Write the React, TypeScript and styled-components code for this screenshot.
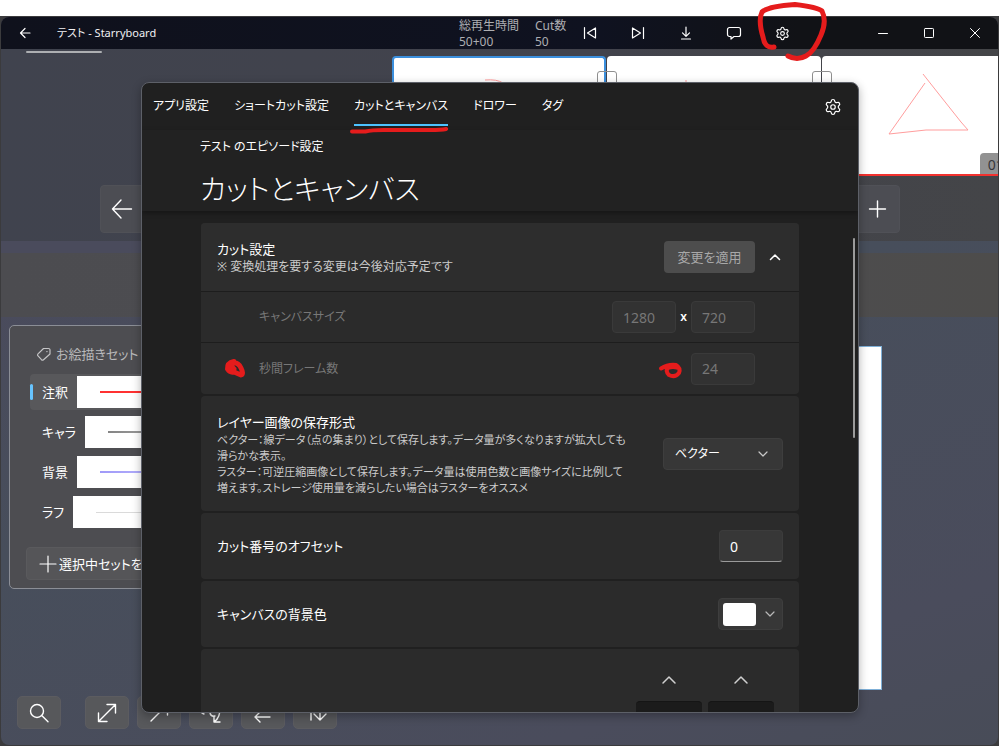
import React from "react";
import styled, { createGlobalStyle } from "styled-components";
import { Settings } from "lucide-react";

const GlobalStyle = createGlobalStyle`
  *, *::before, *::after { box-sizing: border-box; }
  body {
    margin: 0;
    background: #fff;
    font-family: "Noto Sans", "Noto Sans CJK JP", sans-serif;
    font-feature-settings: "palt";
    font-size: 13px;
    line-height: 20px;
    color: #fff;
  }
  button, input, select { font: inherit; font-feature-settings: inherit; color: inherit; }
  h1, h2, p { margin: 0; font-weight: 400; }
`;

const Desktop = styled.div`
  height: 100vh;
  min-height: 600px;
  padding-top: 16px;
  display: flex;
`;

const Backdrop = styled.div`
  flex: 1;
  min-width: 0;
  display: flex;
  padding: 1px;
  background: #3b3b3d;
`;

const AppWindow = styled.div`
  position: relative;
  flex: 1;
  min-width: 0;
  display: flex;
  flex-direction: column;
  border-radius: 8px;
  background: linear-gradient(160deg, #4a4b5c 25%, #474e5b 50%, #4a4c5c 85%, #484c58);
`;

/* ---------- Title bar ---------- */

const TitleBar = styled.header`
  position: relative;
  z-index: 2;
  display: flex;
  align-items: center;
  height: 32px;
  flex: none;
  border-radius: 8px 8px 0 0;
  background: linear-gradient(90deg, #0f111c, #0f1220 60%, #111216 80%);
`;

const BarButton = styled.button<{ $width: number }>`
  position: relative;
  width: ${(p) => p.$width}px;
  height: 32px;
  padding: 0;
  border: 0;
  background: none;
  display: grid;
  place-items: center;
`;

const WindowTitle = styled.span`
  flex: 1;
  padding-left: 8px;
  font-size: 11px;
  line-height: 16px;
  white-space: nowrap;
  color: #f0f0f2;
`;

const Stats = styled.div`
  display: grid;
  grid-template-columns: 76px 31px;
  padding-top: 2px;
  font-size: 12px;
  line-height: 16px;
  white-space: nowrap;
  color: #adaeb2;
`;

const Group = styled.div`
  display: flex;
`;

const Tools = styled(Group)`
  margin-right: 54px;
`;

const CircleMark = styled.svg`
  position: absolute;
  left: -2px;
  top: -17px;
  overflow: visible;
  pointer-events: none;
`;

/* ---------- Timeline ---------- */

const Timeline = styled.section`
  height: 192px;
  flex: none;
  overflow: hidden;
  background: linear-gradient(90deg, #40434e, #42434c 60%, #444548);
`;

const ScrollThumb = styled.div`
  width: 76px;
  height: 2px;
  margin: 2px 0 3px 25px;
  border-radius: 1px;
  background: #adafb2;
`;

const Strip = styled.div`
  display: flex;
  gap: 1px;
  height: 120px;
  padding-left: 39.2%;
`;

const Thumb = styled.div<{ $state?: "selected" | "current" }>`
  position: relative;
  flex: none;
  width: 214px;
  background: #fff;
  border-radius: 4px 4px 0 0;
  border: ${(p) => (p.$state === "selected" ? "2px solid #3b8fdd" : "0")};
  border-bottom: ${(p) => (p.$state === "current" ? "2px solid #f2322f" : "0")};
`;

const LinkBox = styled.span`
  position: absolute;
  z-index: 1;
  top: 15px;
  left: -10px;
  width: 20px;
  height: 20px;
  border: 1px solid #8f8f8f;
  border-radius: 3px;
`;

const StrokeDrawing = styled.svg`
  display: block;
  width: 100%;
  height: 118px;
`;

const CutNumber = styled.span`
  position: absolute;
  left: 158px;
  bottom: 0;
  padding: 2px 8px 0;
  border-radius: 4px 0 0 0;
  background: #929292;
  color: #37373a;
  font-size: 14px;
  line-height: 19px;
`;

const PageNav = styled.div`
  display: flex;
  justify-content: space-between;
  margin: 9px 98px 0 99px;
`;

const NavButton = styled.button`
  width: 45px;
  height: 48px;
  padding: 0;
  display: grid;
  place-items: center;
  border: 1px solid #505157;
  border-radius: 4px;
  background: #4c4d53;
`;

const InfoBar = styled.div`
  height: 64px;
  flex: none;
  margin-top: 12px;
  background: linear-gradient(90deg, #4c4c50, #4d4d51 60%, #4d4c4b);
`;

/* ---------- Workspace ---------- */

const Workspace = styled.main`
  flex: 1;
  min-height: 0;
  display: flex;
  align-items: stretch;
  gap: 29px;
  padding: 8px 116px 0 8px;
`;

const BrushPanel = styled.aside`
  align-self: flex-start;
  flex: 0 0 232px;
  border: 1px solid #8b8e96;
  border-radius: 5px;
  background: #4d4d51;
  padding: 18px 20px 8px 16px;
  overflow: hidden;
`;

const BrushHeading = styled.h2`
  display: flex;
  align-items: center;
  gap: 4px;
  padding-left: 10px;
  margin-bottom: 10px;
  font-size: 13px;
  line-height: 20px;
  color: #b9b9bb;
`;

const BrushRow = styled.button<{ $active?: boolean }>`
  position: relative;
  display: flex;
  align-items: center;
  width: 100%;
  height: 36px;
  margin: 0 0 4px 4px;
  padding: 0 0 0 12px;
  border: 0;
  border-radius: 4px;
  background: ${(p) => (p.$active ? "#58585b" : "transparent")};
  white-space: nowrap;

  &::before {
    content: "";
    display: ${(p) => (p.$active ? "block" : "none")};
    position: absolute;
    left: 0;
    top: 10px;
    width: 3px;
    height: 16px;
    border-radius: 2px;
    background: #67c4ff;
  }
`;

const BrushSample = styled.span<{ $color: string; $thick: number }>`
  flex: 1;
  height: 32px;
  margin-left: 9px;
  padding-left: 23px;
  display: flex;
  align-items: center;
  background: #fff;

  &::after {
    content: "";
    width: 100%;
    height: ${(p) => p.$thick}px;
    background: ${(p) => p.$color};
  }
`;

const AddSetButton = styled.button`
  display: flex;
  align-items: center;
  gap: 2px;
  width: 100%;
  height: 33px;
  margin-top: 17px;
  padding: 0 12px;
  border: 1px solid #5a5a5d;
  border-radius: 4px;
  background: #555558;
  white-space: nowrap;
`;

const Canvas = styled.div`
  flex: 1;
  min-width: 0;
  margin-top: 21px;
  background: #fff;
  border: 1px solid #7fb0d8;
`;

const ViewTools = styled.div`
  display: flex;
  flex: none;
  gap: 8px;
  padding: 6px 16px 16px;
`;

const ViewButton = styled.button<{ $lead?: boolean }>`
  width: 44px;
  height: 33px;
  margin-right: ${(p) => (p.$lead ? 16 : 0)}px;
  padding: 0;
  display: grid;
  place-items: center;
  border: 1px solid #5c5c60;
  border-radius: 5px;
  background: #57585b;
`;

/* ---------- Settings dialog ---------- */

const Overlay = styled.div`
  position: absolute;
  inset: 0;
  z-index: 1;
  display: flex;
  padding: 65px 139px 32px 140px;
`;

const Dialog = styled.div`
  position: relative;
  flex: 1;
  min-width: 0;
  display: flex;
  flex-direction: column;
  overflow: hidden;
  border: 1px solid #5d6068;
  border-radius: 8px;
  background: #202020;
  box-shadow: 0 3px 10px rgba(0, 0, 0, 0.3);
`;

const TabBar = styled.nav`
  position: relative;
  z-index: 1;
  display: flex;
  align-items: center;
  gap: 25px;
  height: 47px;
  flex: none;
  padding: 0 16px 0 11px;
`;

const Tab = styled.button<{ $active?: boolean }>`
  position: relative;
  align-self: flex-start;
  height: 43px;
  padding: 4px 0 0;
  border: 0;
  border-bottom: 2px solid ${(p) => (p.$active ? "#4cc2ff" : "transparent")};
  background: none;
  font-size: 12px;
  white-space: nowrap;
`;

const GearButton = styled.button`
  margin-left: auto;
  padding: 0;
  border: 0;
  background: none;
  display: flex;
`;

const UnderlineMark = styled.svg`
  position: absolute;
  left: -5px;
  top: 43px;
  width: calc(100% + 6px);
  height: 8px;
  overflow: visible;
`;

const DialogHeader = styled.div`
  flex: none;
  padding: 7px 58px 0;
  height: 81px;
  background: #222222;
  box-shadow: 0 2px 5px rgba(0, 0, 0, 0.35);
  z-index: 0;
`;

const Breadcrumb = styled.p`
  font-size: 12px;
`;

const PageTitle = styled.h1`
  font-size: 28px;
  font-weight: 300;
  line-height: 36px;
  margin-top: 14px;
`;

const SettingsList = styled.div`
  flex: 1;
  min-height: 0;
  overflow: hidden;
  display: flex;
  flex-direction: column;
  gap: 2px;
  padding: 12px 59px 0;
`;

const Card = styled.section`
  flex: none;
  border-radius: 4px;
  background: #2b2b2b;
`;

const Row = styled.div<{ $height: number; $kind?: "head" | "sub" }>`
  display: flex;
  align-items: center;
  justify-content: space-between;
  gap: 8px;
  min-height: ${(p) => p.$height}px;
  padding: ${(p) =>
    p.$kind === "head" ? "0 8px 0 16px" : p.$kind === "sub" ? "0 44px 0 58px" : "0 16px"};
  border-top: ${(p) => (p.$kind === "sub" ? "1px solid #1d1d1d" : "0")};
  border-radius: ${(p) => (p.$kind === "head" ? "4px 4px 0 0" : "0")};
  background: ${(p) => (p.$kind === "head" ? "#2d2d2d" : "transparent")};
`;

const Label = styled.label<{ $muted?: boolean }>`
  position: relative;
  display: block;
  white-space: nowrap;
  font-size: ${(p) => (p.$muted ? 12 : 13)}px;
  color: ${(p) => (p.$muted ? "#777777" : "#ffffff")};
`;

const Note = styled.p<{ $dense?: boolean }>`
  font-size: ${(p) => (p.$dense ? 11 : 12)}px;
  line-height: 16px;
  white-space: nowrap;
  color: #cccccc;
`;

const Controls = styled.div`
  position: relative;
  flex: none;
  display: flex;
  align-items: center;
  gap: 4px;
`;

const ApplyButton = styled.button`
  height: 32px;
  width: 91px;
  padding: 0;
  border: 0;
  border-radius: 4px;
  background: #4d4d4d;
  color: #a8a8a8;
  white-space: nowrap;
`;

const IconButton = styled.button`
  width: 32px;
  height: 32px;
  padding: 0;
  border: 0;
  background: none;
  display: grid;
  place-items: center;
`;

const NumberBox = styled.input`
  width: 64px;
  height: 32px;
  padding: 0 10px;
  border: 1px solid #3c3c3c;
  border-bottom-color: #9a9a9a;
  border-radius: 4px;
  background: #373737;
  font-size: 14px;

  &:disabled {
    border-color: #3a3a3a;
    background: #323232;
    color: #777777;
    opacity: 1;
  }
`;

const Times = styled.span`
  width: 7px;
  font-size: 12px;
  font-weight: 600;
  text-align: center;
`;

const SelectWrap = styled.div`
  display: grid;
  align-items: center;
  flex: none;
  width: 120px;

  > * { grid-area: 1 / 1; }
  > svg { justify-self: end; margin-right: 13px; pointer-events: none; }
`;

const Select = styled.select`
  appearance: none;
  width: 100%;
  height: 32px;
  padding: 0 11px;
  border: 1px solid #3e3e3e;
  border-radius: 4px;
  background: #373737;
  font-size: 12px;
`;

const ColorButton = styled.button`
  width: 65px;
  height: 32px;
  padding: 0 6px 0 4px;
  display: flex;
  align-items: center;
  justify-content: space-between;
  border: 1px solid #3e3e3e;
  border-radius: 4px;
  background: #373737;
`;

const Swatch = styled.span`
  width: 33px;
  height: 23px;
  border-radius: 3px;
  background: #fff;
`;

const Steppers = styled.div`
  display: flex;
  justify-content: flex-end;
  gap: 6px;
  padding: 15px 25px 0;
`;

const Stepper = styled.div`
  width: 66px;
  display: flex;
  flex-direction: column;
  align-items: center;
  gap: 5px;
`;

const StepperField = styled.div`
  width: 100%;
  height: 60px;
  border-radius: 4px;
  background: #1b1b1b;
  border-top: 1px solid #151515;
`;

const DialogScroll = styled.div`
  position: absolute;
  right: 3px;
  top: 155px;
  width: 2px;
  height: 200px;
  border-radius: 1px;
  background: #9b9b9b;
`;

const ScribbleMark = styled.svg<{ $left: number }>`
  position: absolute;
  left: ${(p) => p.$left}px;
  top: 0;
  overflow: visible;
`;

/* ---------- Icons ---------- */

type IconProps = { size?: number; d: string; width?: number; color?: string };

const Icon = ({ size = 16, d, width = 1.2, color = "#fff" }: IconProps) => (
  <svg
    width={size}
    height={size}
    viewBox={`0 0 ${size} ${size}`}
    fill="none"
    stroke={color}
    strokeWidth={width}
    strokeLinecap="round"
    strokeLinejoin="round"
    aria-hidden="true"
  >
    <path d={d} />
  </svg>
);

const paths = {
  back: "M13 8H3.500M8 3.500 3.500 8 8 12.500",
  previous: "M2.500 2.500v11M13.500 3v10L5.500 8Z",
  next: "M13.500 2.500v11M2.500 3v10l8-5Z",
  download: "M8 2v9M4.500 7.800 8 11.300l3.500-3.500M3.500 14h9",
  comment:
    "M3.500 2.500h9a2 2 0 0 1 2 2v5a2 2 0 0 1-2 2H8l-3 2.500v-2.500H3.500a2 2 0 0 1-2-2v-5a2 2 0 0 1 2-2Z",
  minimize: "M3.500 8.500h9",
  maximize: "M4.300 3.500h7.400a.8.8 0 0 1 .8.8v7.400a.8.8 0 0 1-.8.8H4.300a.8.8 0 0 1-.8-.8V4.300a.8.8 0 0 1 .8-.8Z",
  close: "M3.500 3.500l9 9M12.500 3.500l-9 9",
  arrowLeft: "M20.500 12H1.500M10 3 1.500 12l8.500 9",
  plus: "M11.500 4v16M3.500 12h16",
  tag: "M7.500 2.500h5a1.500 1.500 0 0 1 1.500 1.500v4L7.500 13.700a1.500 1.500 0 0 1-2 0L2 9.900a1.400 1.400 0 0 1 0-2ZM10.800 5.600h.3",
  up: "M3.500 10.500 8 6l4.500 4.500",
  upWide: "M2 11 8 5l6 6",
  search: "M16.500 10a6.500 6.500 0 1 1-13 0a6.500 6.500 0 1 1 13 0M15 14.700l6 6",
  expand: "M4 20 20 4M12 3.500h8.500V12M3.500 12v8.500H12",
  diagonal: "M4 20 20 4M13 3.500h7.500V14",
  rotate: "M3 12l2 1M11 12q1 4 5 3M20.500 8q1 8-5 12.500M15 15v6h6",
  left: "M19 16H4M9 11l-5 5 5 5",
  swap: "M8 19V5M17 5v14M11 13l6 6 6-6",
};

const brushes = [
  { name: "注釈", color: "#ff3131", thick: 2, active: true },
  { name: "キャラ", color: "linear-gradient(90deg, #858585, #c4c4c4)", thick: 2 },
  { name: "背景", color: "linear-gradient(90deg, #a09af8, #cfcdff)", thick: 2 },
  { name: "ラフ", color: "#dadada", thick: 1 },
];

const tabs = ["アプリ設定", "ショートカット設定", "カットとキャンバス", "ドロワー", "タグ"];
const activeTab = "カットとキャンバス";

export default function App() {
  return (
    <Desktop>
      <GlobalStyle />
      <Backdrop>
        <AppWindow>
          <TitleBar>
            <BarButton $width={48} aria-label="戻る"><Icon d={paths.back} /></BarButton>
            <WindowTitle>テスト - Starryboard</WindowTitle>
            <Stats>
              <span>総再生時間</span>
              <span>Cut数</span>
              <span>50+00</span>
              <span>50</span>
            </Stats>
            <Tools>
              <BarButton $width={48} aria-label="最初へ"><Icon d={paths.previous} /></BarButton>
              <BarButton $width={48} aria-label="最後へ"><Icon d={paths.next} /></BarButton>
              <BarButton $width={48} aria-label="書き出し"><Icon d={paths.download} /></BarButton>
              <BarButton $width={48} aria-label="コメント"><Icon d={paths.comment} /></BarButton>
              <BarButton $width={48} aria-label="設定">
                <Settings size={15} strokeWidth={1.8} color="#fff" />
                <CircleMark width="72" height="62" viewBox="0 0 72 62" fill="none" stroke="#e51c1c" strokeWidth="5" strokeLinecap="round" strokeLinejoin="round">
                  <path d="M18 47Q9 49 7 37Q2 20 6 12Q13 6 39 4.500Q61 7 66 11Q71 21 65 35Q58 52 50 56Q41 61 32 56" />
                </CircleMark>
              </BarButton>
            </Tools>
            <Group>
              <BarButton $width={46} aria-label="最小化"><Icon d={paths.minimize} width={1} /></BarButton>
              <BarButton $width={46} aria-label="最大化"><Icon d={paths.maximize} width={1} /></BarButton>
              <BarButton $width={46} aria-label="閉じる"><Icon d={paths.close} width={1} /></BarButton>
            </Group>
          </TitleBar>

          <Timeline>
            <ScrollThumb />
            <Strip>
              <Thumb $state="selected">
                <StrokeDrawing viewBox="0 0 210 118" fill="none" stroke="#ff9c9c">
                  <path d="M91 22Q103 21 109 25" />
                </StrokeDrawing>
              </Thumb>
              <Thumb>
                <LinkBox />
                <StrokeDrawing viewBox="0 0 214 118" fill="none" stroke="#ff9c9c">
                  <path d="M79 24v6" />
                </StrokeDrawing>
              </Thumb>
              <Thumb $state="current">
                <LinkBox />
                <StrokeDrawing viewBox="0 0 214 118" fill="none" stroke="#ff9d9d">
                  <path d="M101 18 116 37 139 66 146 74H104L67 78 103 27" />
                </StrokeDrawing>
                <CutNumber>01</CutNumber>
              </Thumb>
            </Strip>
            <PageNav>
              <NavButton aria-label="前へ"><Icon size={24} d={paths.arrowLeft} width={1.4} /></NavButton>
              <NavButton aria-label="追加"><Icon size={24} d={paths.plus} width={1.4} /></NavButton>
            </PageNav>
          </Timeline>
          <InfoBar />

          <Workspace>
            <BrushPanel>
              <BrushHeading><Icon d={paths.tag} color="#c4c4c6" />お絵描きセット</BrushHeading>
              {brushes.map((b) => (
                <BrushRow key={b.name} $active={b.active}>
                  {b.name}
                  <BrushSample $color={b.color} $thick={b.thick} />
                </BrushRow>
              ))}
              <AddSetButton><Icon size={18} d="M9 1v16M1 9h16" />選択中セットを</AddSetButton>
            </BrushPanel>
            <Canvas />
          </Workspace>
          <ViewTools>
            <ViewButton $lead aria-label="検索"><Icon size={24} d={paths.search} width={1.4} /></ViewButton>
            <ViewButton aria-label="全体表示"><Icon size={24} d={paths.expand} width={1.4} /></ViewButton>
            <ViewButton aria-label="拡大"><Icon size={24} d={paths.diagonal} width={1.4} /></ViewButton>
            <ViewButton aria-label="回転"><Icon size={24} d={paths.rotate} width={1.4} /></ViewButton>
            <ViewButton aria-label="左右反転"><Icon size={24} d={paths.left} width={1.4} /></ViewButton>
            <ViewButton aria-label="上下反転"><Icon size={24} d={paths.swap} width={1.4} /></ViewButton>
          </ViewTools>

          <Overlay>
            <Dialog role="dialog" aria-labelledby="page-title">
              <TabBar>
                {tabs.map((t) => (
                  <Tab key={t} $active={t === activeTab}>
                    {t}
                    {t === activeTab && (
                      <UnderlineMark viewBox="0 0 98 8" preserveAspectRatio="none" fill="none" stroke="#e51c1c" strokeWidth="4" strokeLinecap="round">
                        <path d="M3 5.500H16Q22 4 34 4H80Q90 4 95 3" />
                      </UnderlineMark>
                    )}
                  </Tab>
                ))}
                <GearButton aria-label="詳細設定"><Settings size={18} strokeWidth={1.6} color="#fff" /></GearButton>
              </TabBar>
              <DialogHeader>
                <Breadcrumb>テスト のエピソード設定</Breadcrumb>
                <PageTitle id="page-title">カットとキャンバス</PageTitle>
              </DialogHeader>

              <SettingsList>
                <Card>
                  <Row $height={68} $kind="head">
                    <div>
                      <Label as="h2">カット設定</Label>
                      <Note>※ 変換処理を要する変更は今後対応予定です</Note>
                    </div>
                    <Controls>
                      <ApplyButton disabled>変更を適用</ApplyButton>
                      <IconButton aria-label="折りたたむ"><Icon d={paths.up} width={1.5} /></IconButton>
                    </Controls>
                  </Row>
                  <Row $height={51} $kind="sub">
                    <Label $muted htmlFor="canvas-width">キャンバスサイズ</Label>
                    <Controls>
                      <NumberBox id="canvas-width" defaultValue="1280" disabled />
                      <Times>x</Times>
                      <NumberBox aria-label="キャンバスの高さ" defaultValue="720" disabled />
                    </Controls>
                  </Row>
                  <Row $height={52} $kind="sub">
                    <Label $muted htmlFor="fps">
                      秒間フレーム数
                      <ScribbleMark $left={-34} width="22" height="20" viewBox="0 0 22 20" fill="none" stroke="#e51c1c" strokeWidth="5" strokeLinecap="round" strokeLinejoin="round">
                        <path d="M9 2.500Q2 4 2.500 10Q5 14 9 13L16 16Q19 15 16 9Q13 3 8 4Q5 7 9 10" />
                      </ScribbleMark>
                    </Label>
                    <Controls>
                      <ScribbleMark $left={-32} width="24" height="32" viewBox="0 0 24 32" fill="none" stroke="#e51c1c" strokeWidth="4" strokeLinecap="round" strokeLinejoin="round">
                        <path d="M2 15.500Q9 11 17 12Q22 15 20 20Q16 25 10 22Q6 18 9 15Q14 13 19 15" />
                      </ScribbleMark>
                      <NumberBox id="fps" defaultValue="24" disabled />
                    </Controls>
                  </Row>
                </Card>

                <Card>
                  <Row $height={115}>
                    <div>
                      <Label htmlFor="layer-format">レイヤー画像の保存形式</Label>
                      <Note $dense>
                        ベクター：線データ（点の集まり）として保存します。データ量が多くなりますが拡大しても
                        <br />
                        滑らかな表示。
                        <br />
                        ラスター：可逆圧縮画像として保存します。データ量は使用色数と画像サイズに比例して
                        <br />
                        増えます。ストレージ使用量を減らしたい場合はラスターをオススメ
                      </Note>
                    </div>
                    <SelectWrap>
                      <Select id="layer-format" defaultValue="vector">
                        <option value="vector">ベクター</option>
                        <option value="raster">ラスター</option>
                      </Select>
                      <Icon size={14} d="M3 5 7 9l4-4" color="#c8c8c8" />
                    </SelectWrap>
                  </Row>
                </Card>

                <Card>
                  <Row $height={66}>
                    <Label htmlFor="cut-offset">カット番号のオフセット</Label>
                    <NumberBox id="cut-offset" defaultValue="0" />
                  </Row>
                </Card>

                <Card>
                  <Row $height={66}>
                    <Label htmlFor="canvas-color">キャンバスの背景色</Label>
                    <ColorButton id="canvas-color">
                      <Swatch />
                      <Icon size={12} d="M2 4 6 8l4-4" color="#b8b8b8" />
                    </ColorButton>
                  </Row>
                </Card>

                <Card>
                  <Steppers>
                    {["幅", "高さ"].map((name) => (
                      <Stepper key={name}>
                        <IconButton aria-label={`${name}を増やす`}><Icon d={paths.upWide} width={1.5} color="#d0d0d0" /></IconButton>
                        <StepperField />
                      </Stepper>
                    ))}
                  </Steppers>
                </Card>
              </SettingsList>
              <DialogScroll />
            </Dialog>
          </Overlay>
        </AppWindow>
      </Backdrop>
    </Desktop>
  );
}
